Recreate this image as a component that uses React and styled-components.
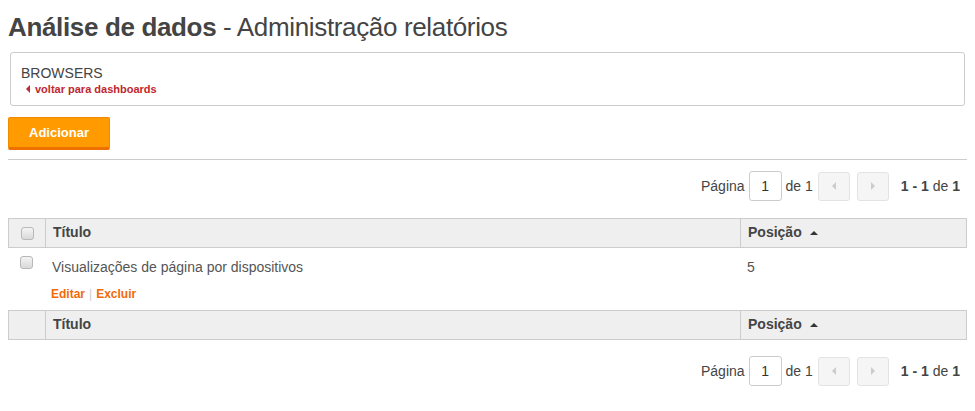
import React from "react";
import styled, { createGlobalStyle } from "styled-components";

const GlobalStyle = createGlobalStyle`
  body {
    margin: 0;
    padding: 0 8px;
    background: #fff;
    font-family: "Liberation Sans", Arial, sans-serif;
    color: #444;
  }
`;

const Title = styled.h1`
  margin: 0;
  padding-top: 11px;
  height: 41px;
  font-size: 26px;
  line-height: 32px;
  font-weight: normal;
  color: #444;
  letter-spacing: -0.35px;

  b {
    font-weight: bold;
  }
`;

const InfoBox = styled.div`
  margin: 0 2px;
  border: 1px solid #ccc;
  border-radius: 3px;
  padding: 12px 10px 9px;
`;

const BoxTitle = styled.div`
  font-size: 14px;
  line-height: 16px;
  color: #444;
`;

const BackLink = styled.a`
  display: flex;
  align-items: center;
  gap: 5px;
  margin-left: 5px;
  margin-top: 1px;
  font-size: 11px;
  line-height: 14px;
  font-weight: bold;
  color: #c1272d;
  text-decoration: none;
`;

const Caret = styled.span`
  display: inline-block;
  width: 0;
  height: 0;
  border-top: 4px solid transparent;
  border-bottom: 4px solid transparent;
  border-${(p) => (p.$dir === "left" ? "right" : "left")}: 4px solid ${(p) => p.$color};
`;

const AddButton = styled.button`
  margin-top: 11px;
  width: 102px;
  height: 33px;
  border: 1px solid #f08a00;
  border-bottom: 3px solid #ee7000;
  border-radius: 2px;
  background: #ff9b00;
  color: #fff;
  font-family: inherit;
  font-size: 13px;
  font-weight: bold;
  padding: 0;
  cursor: pointer;
`;

const Rule = styled.hr`
  margin: 9px 0 0;
  border: 0;
  border-top: 1px solid #ccc;
`;

const Pager = styled.div`
  display: flex;
  justify-content: flex-end;
  align-items: center;
  padding-right: 7px;
  margin-top: ${(p) => p.$top}px;
  height: 30px;
  font-size: 14px;
  color: #444;
`;

const PageInput = styled.div`
  width: 31px;
  height: 28px;
  margin: 0 4px;
  border: 1px solid #ccc;
  border-radius: 3px;
  display: flex;
  align-items: center;
  justify-content: center;
  color: #333;
  font-size: 14px;
`;

const NavButton = styled.div`
  width: 30px;
  height: 27px;
  border: 1px solid #e3e3e3;
  border-radius: 3px;
  background: #f5f5f5;
  display: flex;
  align-items: center;
  justify-content: center;
  margin-left: ${(p) => p.$ml}px;
`;

const Count = styled.span`
  margin-left: 12px;
  b {
    font-weight: bold;
  }
`;

const Table = styled.div`
  margin-top: 17px;
  display: grid;
  grid-template-columns: 37px 695px 1fr;
`;

const HeadCell = styled.div`
  height: 26px;
  background: #efefef;
  border-top: 1px solid #ccc;
  border-bottom: 1px solid #ccc;
  border-left: 1px solid #ccc;
  border-right: ${(p) => (p.$last ? "1px solid #ccc" : "0")};
  display: flex;
  align-items: center;
  justify-content: ${(p) => (p.$center ? "center" : "flex-start")};
  padding-left: ${(p) => (p.$center ? 0 : 7)}px;
  padding-bottom: 2px;
  font-size: 14px;
  font-weight: bold;
  color: #444;
  gap: 8px;
`;

const Check = styled.span`
  display: inline-block;
  width: 11px;
  height: 11px;
  border: 1px solid #b8b8b8;
  border-radius: 3px;
  background: linear-gradient(#f4f4f4, #d9d9d9);
  margin-top: ${(p) => p.$mt || 0}px;
`;

const BodyCell = styled.div`
  height: 62px;
  padding-top: ${(p) => p.$pt || 0}px;
  padding-left: ${(p) => p.$pl || 0}px;
  box-sizing: border-box;
  font-size: 14px;
  color: #555;
  display: flex;
  flex-direction: column;
  align-items: ${(p) => (p.$center ? "center" : "flex-start")};
`;

const RowText = styled.div`
  line-height: 16px;
`;

const Actions = styled.div`
  margin-top: 12px;
  margin-left: -1px;
  font-size: 12px;
  font-weight: bold;
  line-height: 14px;
  display: flex;
  gap: 4px;
  a {
    color: #f26a0a;
    text-decoration: none;
  }
  span {
    color: #ccc;
    font-weight: normal;
  }
`;

const SortArrow = styled.span`
  display: inline-block;
  width: 0;
  height: 0;
  border-left: 4px solid transparent;
  border-right: 4px solid transparent;
  border-bottom: 4px solid #333;
  margin-top: 1px;
`;

const Pagination = ({ top }) => (
  <Pager $top={top}>
    <span>Página</span>
    <PageInput>1</PageInput>
    <span>de 1</span>
    <NavButton $ml={5}>
      <Caret $dir="left" $color="#ccc" />
    </NavButton>
    <NavButton $ml={7}>
      <Caret $dir="right" $color="#ccc" />
    </NavButton>
    <Count>
      <b>1 - 1</b> de <b>1</b>
    </Count>
  </Pager>
);

const HeaderRow = ({ withCheck }) => (
  <>
    <HeadCell $center>{withCheck && <Check $mt={3} />}</HeadCell>
    <HeadCell>Título</HeadCell>
    <HeadCell $last>
      Posição <SortArrow />
    </HeadCell>
  </>
);

export default function App() {
  return (
    <>
      <GlobalStyle />
      <Title>
        <b>Análise de dados</b> - Administração relatórios
      </Title>
      <InfoBox>
        <BoxTitle>BROWSERS</BoxTitle>
        <BackLink href="#">
          <Caret $dir="left" $color="#c1272d" />
          voltar para dashboards
        </BackLink>
      </InfoBox>
      <AddButton>Adicionar</AddButton>
      <Rule />
      <Pagination top={11} />
      <Table>
        <HeaderRow withCheck />
        <BodyCell $center $pt={8}>
          <Check />
        </BodyCell>
        <BodyCell $pt={11} $pl={7}>
          <RowText>Visualizações de página por dispositivos</RowText>
          <Actions>
            <a href="#">Editar</a>
            <span>|</span>
            <a href="#">Excluir</a>
          </Actions>
        </BodyCell>
        <BodyCell $pt={11} $pl={7}>
          <RowText>5</RowText>
        </BodyCell>
        <HeaderRow />
      </Table>
      <Pagination top={16} />
    </>
  );
}
